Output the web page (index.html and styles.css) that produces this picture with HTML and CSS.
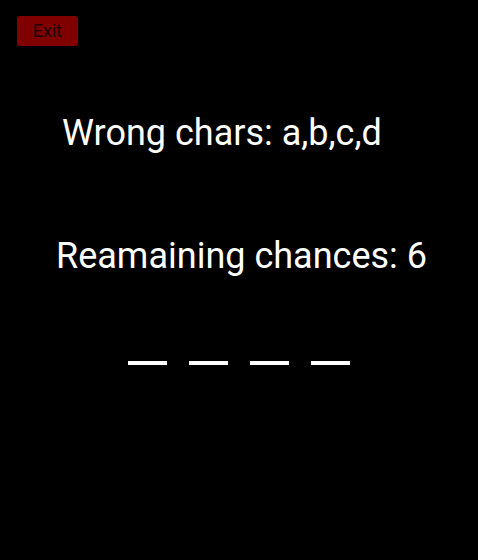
FILE: index.html
```html
<!DOCTYPE html>
<html>
<head>
<meta charset="utf-8">
<link rel="stylesheet" href="styles.css">
</head>
<body>
<div class="screen">
  <div class="topbar"><button class="exit">Exit</button></div>
  <div class="wrong">Wrong chars: a,b,c,d</div>
  <div class="remaining">Reamaining chances: 6</div>
  <div class="slots">
    <span class="slot"></span><span class="slot"></span><span class="slot"></span><span class="slot"></span>
  </div>
</div>
</body>
</html>
```
FILE: styles.css
```css
html, body {
  margin: 0;
  padding: 0;
  background: #000;
}
.screen {
  width: 478px;
  height: 560px;
  background: #000;
  font-family: Roboto, "Noto Sans", sans-serif;
  color: #fff;
  display: flex;
  flex-direction: column;
}
.topbar {
  padding: 16px 0 0 17px;
  display: flex;
}
.exit {
  width: 61px;
  height: 30px;
  background: #800000;
  border: none;
  border-radius: 3px;
  color: #1a0000;
  font-family: Roboto, sans-serif;
  font-size: 18px;
  line-height: 30px;
  padding: 0;
}
.wrong {
  margin-top: 66px;
  padding-left: 62px;
  font-size: 36px;
  line-height: 42px;
}
.remaining {
  margin-top: 81px;
  padding-left: 56px;
  font-size: 36px;
  line-height: 42px;
}
.slots {
  margin-top: 84px;
  padding-left: 128px;
  display: flex;
  gap: 22px;
}
.slot {
  width: 39px;
  height: 4px;
  background: #fff;
}
```
